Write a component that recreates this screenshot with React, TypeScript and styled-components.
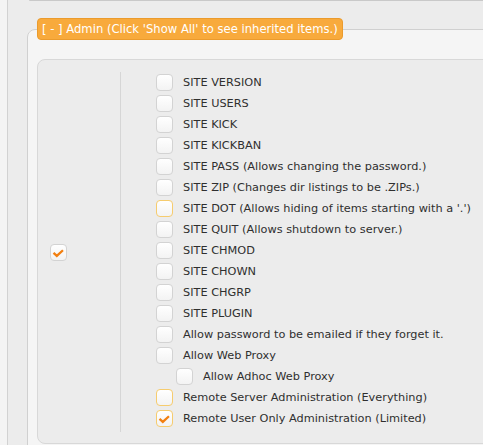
import React from "react";
import styled, { createGlobalStyle } from "styled-components";

const Global = createGlobalStyle`
  html, body { margin: 0; padding: 0; }
  body {
    background: #f4f4f4;
    overflow: hidden;
    font-family: "DejaVu Sans", Verdana, sans-serif;
    font-size: 11.3px;
    color: #2f2f2f;
  }
`;

const Page = styled.div`
  margin-left: 7px;
  height: 445px;
  overflow: hidden;
  border-left: 1px solid #d2d2d2;
  background: #ececec;
`;

const TopBox = styled.div`
  margin-left: 21px;
  height: 0;
  border-bottom: 1px solid #c9c9c9;
  border-bottom-left-radius: 4px;
`;

const Fieldset = styled.fieldset`
  margin: 17px -40px 0 19px;
  padding: 19px 0 30px 9px;
  border: 1px solid #d0d0d0;
  border-radius: 8px;
  background: #f5f5f5;
  min-width: 0;
`;

const Legend = styled.legend`
  padding: 0 4px;
  height: 20px;
  line-height: 20px;
  font-size: 11.6px;
  background: #f8aa3c;
  border: 1px solid #eb9b2d;
  border-radius: 4px;
  color: #fff;
  white-space: nowrap;
`;

const Panel = styled.div`
  display: flex;
  padding: 12px 0 11px;
  border: 1px solid #d8d8d8;
  border-radius: 8px;
  background: #ececec;
`;

const SideCol = styled.div`
  width: 70px;
  padding-left: 12px;
  display: flex;
  align-items: center;
  border-right: 1px solid #d6d6d6;
`;

const List = styled.div`
  display: flex;
  flex-direction: column;
  padding: 0 0 3px 35px;
`;

const Row = styled.label<{ $indent?: boolean }>`
  display: flex;
  align-items: center;
  height: 21px;
  gap: 10px;
  padding-left: ${(p) => (p.$indent ? "20px" : "0")};
  white-space: nowrap;
`;

const Box = styled.span<{ $hl?: boolean }>`
  box-sizing: border-box;
  width: 17px;
  height: 17px;
  flex: none;
  border-radius: 4px;
  border: 1px solid ${(p) => (p.$hl ? "#f6cc6e" : "#d3d3d3")};
  background: linear-gradient(#ffffff, #f3f3f3);
  display: flex;
  align-items: center;
  justify-content: center;
`;

const Check = () => (
  <svg width="17" height="17" viewBox="0 0 17 17" style={{ display: "block" }}>
    <path d="M3.8 9.8 L6.6 12.4 L12.6 6.8" fill="none" stroke="#f27f10" strokeWidth="2.6" strokeLinecap="square" strokeLinejoin="miter" />
  </svg>
);

const CheckBox = ({ checked, hl }: { checked?: boolean; hl?: boolean }) => (
  <Box $hl={hl}>{checked ? <Check /> : null}</Box>
);

const items: { label: string; hl?: boolean; checked?: boolean; indent?: boolean }[] = [
  { label: "SITE VERSION" },
  { label: "SITE USERS" },
  { label: "SITE KICK" },
  { label: "SITE KICKBAN" },
  { label: "SITE PASS (Allows changing the password.)" },
  { label: "SITE ZIP (Changes dir listings to be .ZIPs.)" },
  { label: "SITE DOT (Allows hiding of items starting with a '.')", hl: true },
  { label: "SITE QUIT (Allows shutdown to server.)" },
  { label: "SITE CHMOD" },
  { label: "SITE CHOWN" },
  { label: "SITE CHGRP" },
  { label: "SITE PLUGIN" },
  { label: "Allow password to be emailed if they forget it." },
  { label: "Allow Web Proxy" },
  { label: "Allow Adhoc Web Proxy", indent: true },
  { label: "Remote Server Administration (Everything)", hl: true },
  { label: "Remote User Only Administration (Limited)", hl: true, checked: true },
];

export default function App() {
  return (
    <>
      <Global />
      <Page>
        <TopBox />
        <Fieldset>
          <Legend>[ - ] Admin (Click 'Show All' to see inherited items.)</Legend>
          <Panel>
            <SideCol>
              <CheckBox checked />
            </SideCol>
            <List>
              {items.map((it) => (
                <Row key={it.label} $indent={it.indent}>
                  <CheckBox checked={it.checked} hl={it.hl} />
                  <span>{it.label}</span>
                </Row>
              ))}
            </List>
          </Panel>
        </Fieldset>
      </Page>
    </>
  );
}
